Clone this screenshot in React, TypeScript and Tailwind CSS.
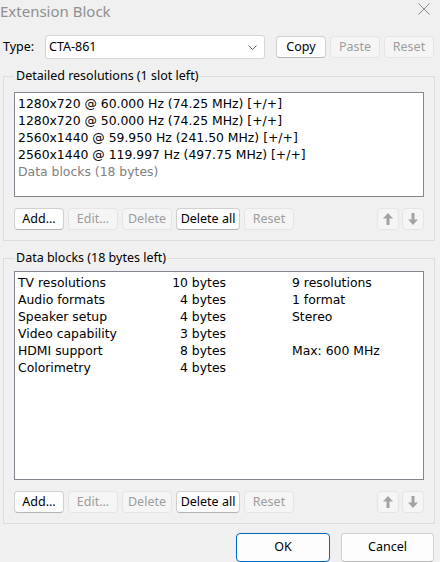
import type { ReactNode } from "react";

const ui = "font-['Noto_Sans',sans-serif] text-[12.5px]";
const mono = "font-['DejaVu_Sans',sans-serif] text-[12.4px] leading-[17px] text-black";

function Btn({
  children,
  disabled,
  width = "w-[50px]",
  primary,
}: {
  children: ReactNode;
  disabled?: boolean;
  width?: string;
  primary?: boolean;
}) {
  return (
    <button
      className={`${width} h-[22px] shrink-0 rounded-[4px] border flex items-center justify-center ${ui} ${
        disabled
          ? "bg-[#f5f5f5] border-[#e5e5e5] text-[#9d9d9d]"
          : primary
            ? "bg-[#fdfdfd] border-[#0067c0] text-black"
            : "bg-[#fdfdfd] border-[#d0d0d0] border-b-[#b5b5b5] text-black"
      }`}
    >
      {children}
    </button>
  );
}

function ArrowIcon({ down }: { down?: boolean }) {
  return (
    <svg width="10" height="12" viewBox="0 0 10 12" className={down ? "rotate-180" : ""}>
      <path d="M5 0 L10 5.5 L6.5 5.5 L6.5 12 L3.5 12 L3.5 5.5 L0 5.5 Z" fill="#a3a3a3" />
    </svg>
  );
}

function ArrowBtn({ down }: { down?: boolean }) {
  return (
    <button className="w-[22px] h-[22px] rounded-[4px] border border-[#e5e5e5] bg-[#f5f5f5] flex items-center justify-center">
      <ArrowIcon down={down} />
    </button>
  );
}

// row of list actions shared by both group boxes
function ListButtons() {
  return (
    <div className="flex items-center mt-[11px]">
      <div className="flex gap-[4px]">
        <Btn>Add...</Btn>
        <Btn disabled>Edit...</Btn>
        <Btn disabled>Delete</Btn>
        <Btn width="w-[64px]">Delete all</Btn>
        <Btn disabled>Reset</Btn>
      </div>
      <div className="ml-auto flex gap-[3px]">
        <ArrowBtn />
        <ArrowBtn down />
      </div>
    </div>
  );
}

function GroupBox({ title, children, className = "" }: { title: string; children: ReactNode; className?: string }) {
  return (
    <fieldset className={`ml-[3px] w-[432px] border border-[#dcdcdc] px-[10px] pb-[10px] ${className}`}>
      <legend className={`px-[2px] leading-[16px] text-black ${ui}`}>{title}</legend>
      {children}
    </fieldset>
  );
}

const modes = [
  "1280x720 @ 60.000 Hz (74.25 MHz) [+/+]",
  "1280x720 @ 50.000 Hz (74.25 MHz) [+/+]",
  "2560x1440 @ 59.950 Hz (241.50 MHz) [+/+]",
  "2560x1440 @ 119.997 Hz (497.75 MHz) [+/+]",
];

const blocks = [
  ["TV resolutions", "10 bytes", "9 resolutions"],
  ["Audio formats", "4 bytes", "1 format"],
  ["Speaker setup", "4 bytes", "Stereo"],
  ["Video capability", "3 bytes", ""],
  ["HDMI support", "8 bytes", "Max: 600 MHz"],
  ["Colorimetry", "4 bytes", ""],
];

export default function App() {
  return (
    <div className="w-[440px] h-[562px] overflow-hidden bg-[#f0f0f0] flex flex-col">
      {/* Title bar */}
      <div className="h-[22px] flex items-center">
        <span className="font-['Noto_Sans',sans-serif] text-[15px] text-[#8f8f8f]">Extension Block</span>
        <svg width="12" height="12" viewBox="0 0 12 12" className="ml-auto mr-[10px] mt-[-4px]">
          <path d="M0.5 0.5 L11.5 11.5 M11.5 0.5 L0.5 11.5" stroke="#8a8a8a" strokeWidth="1" />
        </svg>
      </div>

      {/* Type row */}
      <div className="mt-[13px] h-[24px] flex items-center pl-[3px]">
        <span className={`${ui} text-black w-[42px]`}>Type:</span>
        <div className="w-[220px] h-[24px] bg-white border border-[#d5d5d5] rounded-[3px] flex items-center pl-[3px] pr-[7px]">
          <span className={`${ui} text-black`}>CTA-861</span>
          <svg width="9" height="5" viewBox="0 0 9 5" className="ml-auto">
            <path d="M0.5 0.5 L4.5 4.5 L8.5 0.5" fill="none" stroke="#606060" strokeWidth="1" />
          </svg>
        </div>
        <div className="ml-[11px] flex gap-[4px]">
          <Btn>Copy</Btn>
          <Btn disabled>Paste</Btn>
          <Btn disabled>Reset</Btn>
        </div>
      </div>

      {/* Detailed resolutions */}
      <GroupBox title="Detailed resolutions (1 slot left)" className="mt-[9px] pt-[8px]">
        <div className="h-[105px] bg-white border border-[#828790] px-[3px] pt-[2px]">
          <div className={mono}>
            {modes.map((m) => (
              <div key={m}>{m}</div>
            ))}
            <div className="text-[#808080]">Data blocks (18 bytes)</div>
          </div>
        </div>
        <ListButtons />
      </GroupBox>

      {/* Data blocks */}
      <GroupBox title="Data blocks (18 bytes left)" className="mt-[9px] pt-[5px]">
        <div className="h-[209px] bg-white border border-[#828790] px-[3px] pt-[2px]">
          <div className={mono}>
            {blocks.map(([name, size, info]) => (
              <div key={name} className="flex">
                <span className="w-[140px]">{name}</span>
                <span className="w-[68px] text-right">{size}</span>
                <span className="ml-[66px]">{info}</span>
              </div>
            ))}
          </div>
        </div>
        <ListButtons />
      </GroupBox>

      {/* Dialog buttons */}
      <div className="mt-[9px] flex justify-end gap-[11px] pr-[6px]">
        <Btn primary width="w-[94px] h-[29px]">OK</Btn>
        <Btn width="w-[93px] h-[29px]">Cancel</Btn>
      </div>
    </div>
  );
}
